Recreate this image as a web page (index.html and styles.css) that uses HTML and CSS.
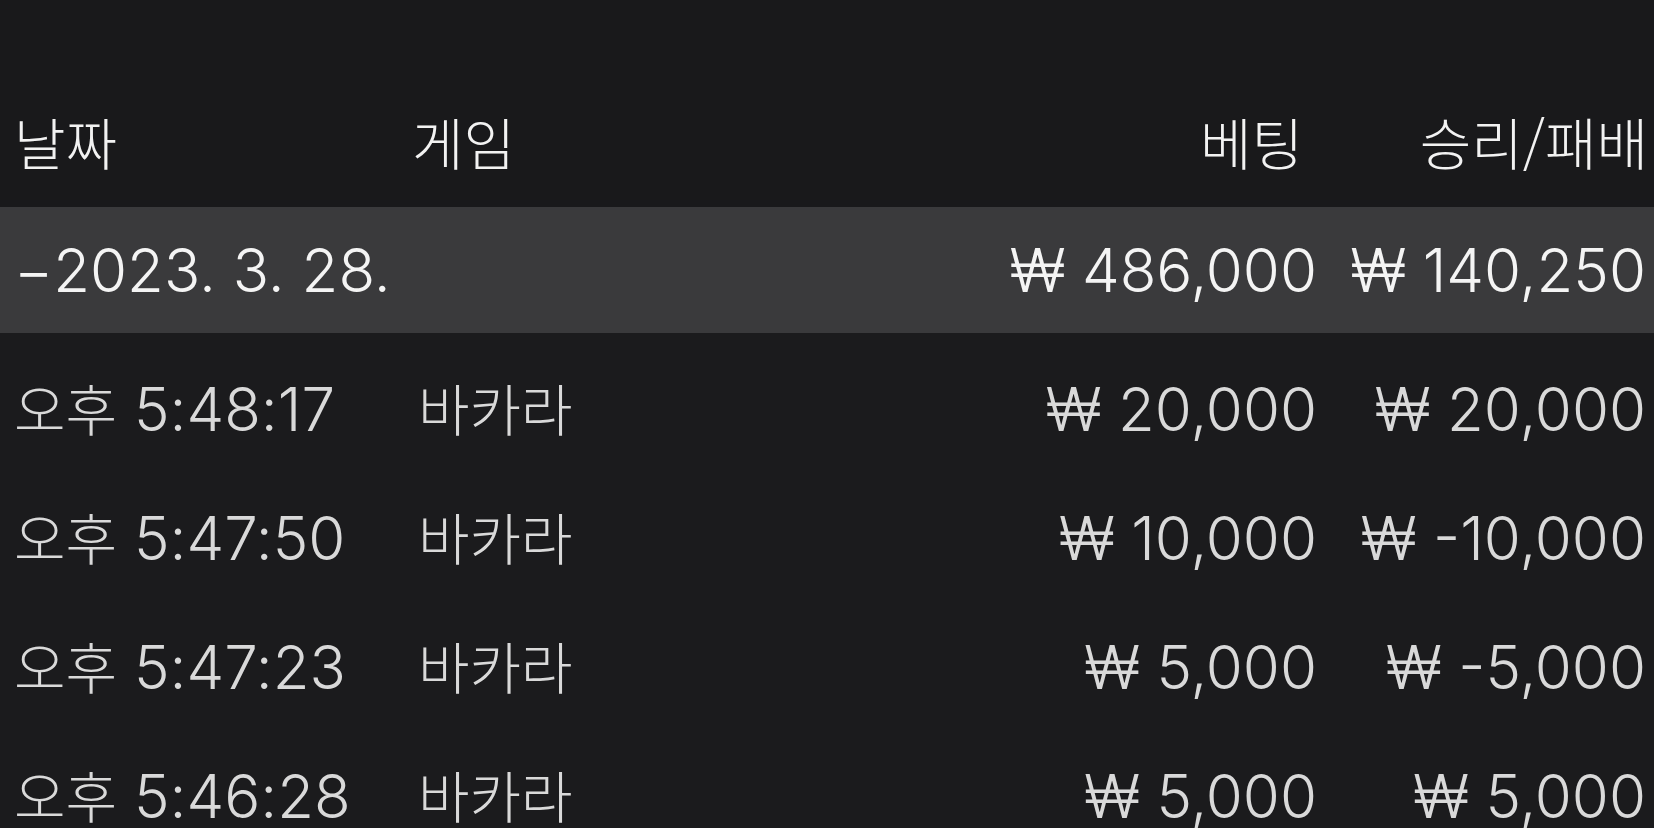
FILE: index.html
```html
<!DOCTYPE html>
<html lang="ko">
<head>
    <meta charset="UTF-8">
    <meta name="viewport" content="width=device-width, initial-scale=1.0">
    <title>베팅 내역</title>
    <link rel="stylesheet" href="styles.css">
</head>
<body>

<div class="sheet">
    <div class="row head">
        <div class="cell"><span class="ko">날짜</span></div>
        <div class="cell game"><span class="ko">게임</span></div>
        <div class="cell num bet-head"><span class="ko">베팅</span></div>
        <div class="cell num"><span class="ko">승리/패배</span></div>
    </div>

    <div class="row group">
        <div class="cell date"><span class="toggle">−</span>2023. 3. 28.</div>
        <div class="cell"></div>
        <div class="cell num">₩ 486,000</div>
        <div class="cell num">₩ 140,250</div>
    </div>

    <div class="rows">
        <div class="row item">
            <div class="cell"><span class="ko">오후</span> 5:48:17</div>
            <div class="cell game"><span class="ko">바카라</span></div>
            <div class="cell num">₩ 20,000</div>
            <div class="cell num">₩ 20,000</div>
        </div>
        <div class="row item">
            <div class="cell"><span class="ko">오후</span> 5:47:50</div>
            <div class="cell game"><span class="ko">바카라</span></div>
            <div class="cell num">₩ 10,000</div>
            <div class="cell num">₩ -10,000</div>
        </div>
        <div class="row item">
            <div class="cell"><span class="ko">오후</span> 5:47:23</div>
            <div class="cell game"><span class="ko">바카라</span></div>
            <div class="cell num">₩ 5,000</div>
            <div class="cell num">₩ -5,000</div>
        </div>
        <div class="row item">
            <div class="cell"><span class="ko">오후</span> 5:46:28</div>
            <div class="cell game"><span class="ko">바카라</span></div>
            <div class="cell num">₩ 5,000</div>
            <div class="cell num">₩ 5,000</div>
        </div>
    </div>
</div>

</body>
</html>
```

FILE: styles.css
```css
/* Basic Reset */
* {
    margin: 0;
    padding: 0;
    box-sizing: border-box;
}

html, body {
    height: 100%;
}

body {
    font-family: Inter, "Noto Sans CJK KR", sans-serif;
    font-weight: 300;
    font-size: 60px;
    line-height: 1;
    background-color: #1b1b1d;
    color: #d9d9d9;
    overflow: hidden;
}

/* Table layout */
.sheet {
    display: flex;
    flex-direction: column;
}

.row {
    display: grid;
    grid-template-columns: 400px 1fr 360px 329px;
    align-items: center;
    padding: 0 8px 0 14px;
    white-space: nowrap;
}

.cell.num {
    text-align: right;
}

.ko {
    font-family: "Noto Sans CJK KR", sans-serif;
    font-size: 56px;
}

/* Header */
.head {
    height: 207px;
    padding-top: 79px;
    padding-right: 6px;
    background-color: #19191b;
    color: #f2f2f2;
}

.head .game {
    margin-left: -2px;
}

.bet-head {
    padding-right: 16px;
}

/* Date group */
.group {
    height: 126px;
    background-color: #3a3a3c;
    color: #f4f4f4;
}

.toggle {
    display: inline-block;
}

/* Entries */
.rows {
    padding-top: 11px;
}

.item {
    height: 129px;
}

.item .game {
    margin-left: 4px;
}
```
